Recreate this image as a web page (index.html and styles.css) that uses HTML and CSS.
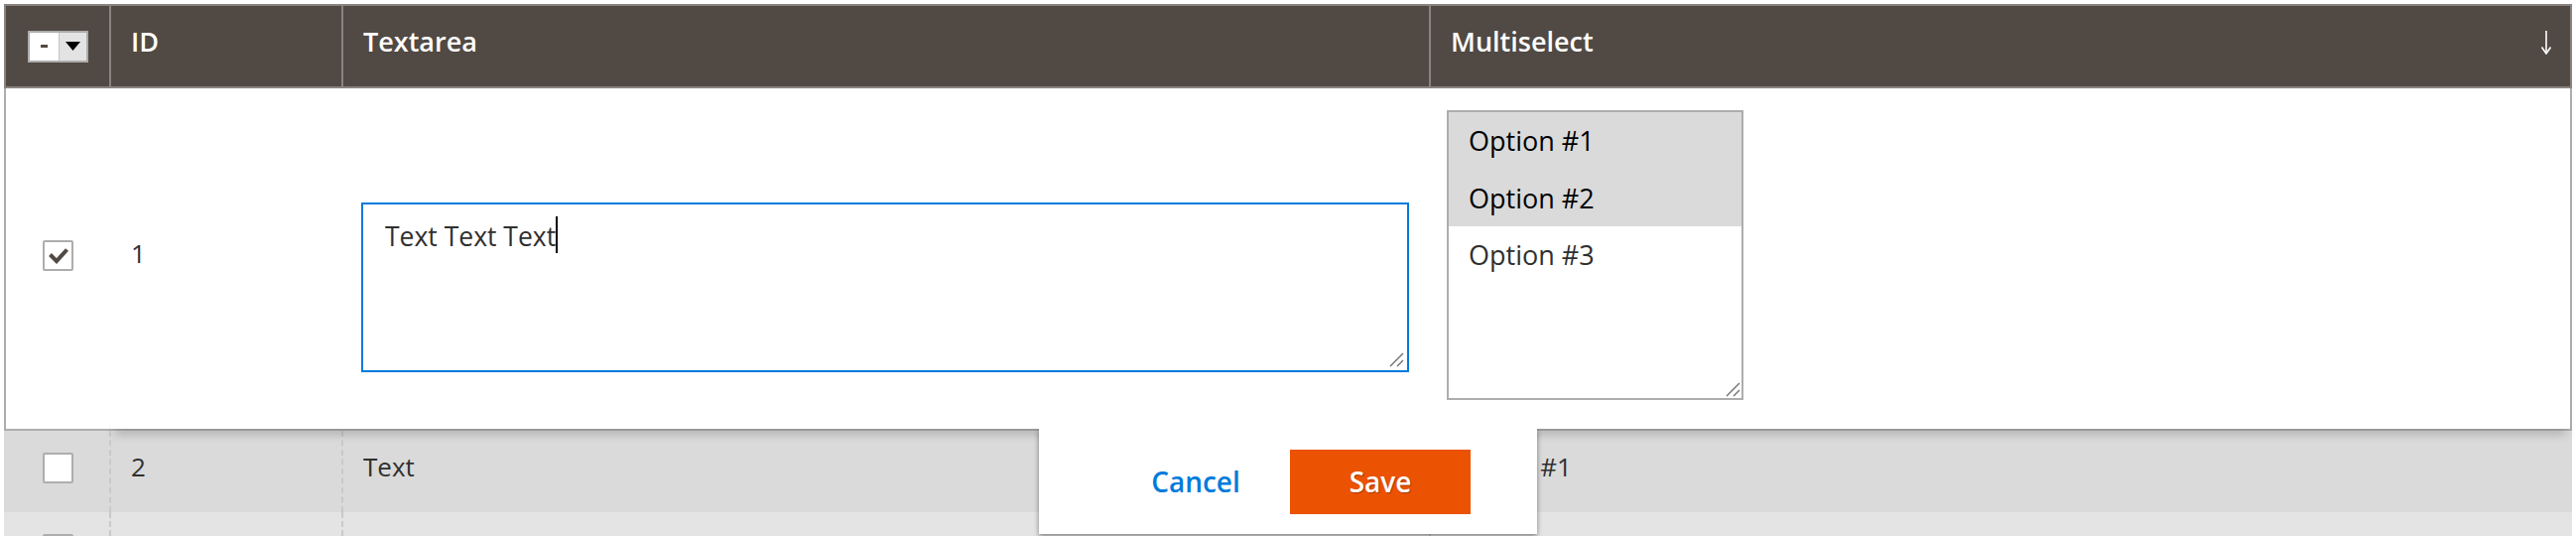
FILE: index.html
```html
<!DOCTYPE html>
<html lang="en">
<head>
<meta charset="utf-8">
<title>Inline edit grid</title>
<link rel="stylesheet" href="styles.css">
</head>
<body>
<div class="grid">
  <div class="row head">
    <div class="th th-check">
      <div class="multicheck">
        <span class="mc-box"><span class="mc-dash"></span></span>
        <span class="mc-toggle"><svg width="15" height="9" viewBox="0 0 15 9"><polygon points="0,0 15,0 7.5,9" fill="#000"/></svg></span>
      </div>
    </div>
    <div class="th">ID</div>
    <div class="th">Textarea</div>
    <div class="th th-sort"><span>Multiselect</span><svg class="sort-arrow" width="12" height="24" viewBox="0 0 12 24"><path d="M6 0 V21" stroke="#fff" stroke-width="1.6" fill="none"/><path d="M1.5 16.5 L6 23 L10.5 16.5" stroke="#fff" stroke-width="1.6" fill="none"/></svg></div>
  </div>

  <div class="row row-edit">
    <div class="td td-check"><span class="checkbox"><svg width="27" height="27" viewBox="0 0 27 27"><path d="M5.5 12.5 L12 19 L22.5 7.5" stroke="#514943" stroke-width="4" fill="none"/></svg></span></div>
    <div class="td td-id">1</div>
    <div class="td td-text">
      <div class="textarea">Text Text Text<span class="caret"></span>
        <svg class="grip" width="15" height="15" viewBox="0 0 15 15"><path d="M1 14 L14 1 M8 14 L14 8" stroke="#6e6e6e" stroke-width="1.4" fill="none"/></svg>
      </div>
    </div>
    <div class="td td-multi">
      <div class="multiselect">
        <div class="opt sel">Option #1</div>
        <div class="opt sel">Option #2</div>
        <div class="opt">Option #3</div>
        <svg class="grip grip-ms" width="15" height="15" viewBox="0 0 15 15"><path d="M1 14 L14 1 M8 14 L14 8" stroke="#6e6e6e" stroke-width="1.4" fill="none"/></svg>
      </div>
    </div>
  </div>

  <div class="row row-dim">
    <div class="td td-check"><span class="checkbox"></span></div>
    <div class="td">2</div>
    <div class="td">Text</div>
    <div class="td">Option #1</div>
  </div>

  <div class="row row-dim row-dim-alt">
    <div class="td td-check"><span class="checkbox"></span></div>
    <div class="td"></div>
    <div class="td"></div>
    <div class="td"></div>
  </div>

  <div class="edit-actions">
    <button class="btn btn-cancel" type="button">Cancel</button>
    <button class="btn btn-save" type="button">Save</button>
  </div>
</div>
</body>
</html>
```

FILE: styles.css
```css
html, body {
  margin: 0;
  background: #fff;
}
body {
  padding: 4px 4px 0;
  font-family: "Open Sans", "Liberation Sans", sans-serif;
  color: #303030;
  overflow: hidden;
}

.grid {
  position: relative;
}

.row {
  display: grid;
  grid-template-columns: 106px 234px 1096px 1fr;
  box-sizing: border-box;
}

/* header */
.head {
  height: 85px;
  background: #514943;
  border: 2px solid #8a837f;
  color: #fff;
  font-size: 27px;
  font-weight: 600;
  line-height: 40px;
}
.th {
  padding: 16px 20px 0;
  border-right: 2px solid #8a837f;
  white-space: nowrap;
}
.th:last-child {
  border-right: 0;
}
.th-check {
  padding: 0;
  display: flex;
  align-items: center;
  justify-content: center;
}
.th-sort {
  display: flex;
  justify-content: space-between;
  align-items: flex-start;
  padding-right: 18px;
}
.sort-arrow {
  margin-top: 9px;
}

.multicheck {
  display: flex;
  width: 61px;
  height: 32px;
  box-sizing: border-box;
  border: 2px solid #adadad;
}
.mc-box {
  width: 29px;
  background: #fff;
  border-right: 1px solid #c4c4c4;
  display: flex;
  align-items: center;
  justify-content: center;
}
.mc-dash {
  width: 7px;
  height: 3px;
  background: #514943;
}
.mc-toggle {
  flex: 1;
  background: #e3e3e3;
  display: flex;
  align-items: center;
  justify-content: center;
}

/* body cells */
.td {
  font-size: 26px;
  line-height: 36px;
  padding: 0 20px;
  border-right: 2px solid transparent;
  white-space: nowrap;
  overflow: hidden;
}
.td:last-child {
  border-right: 0;
}
.td-check {
  padding: 0;
  display: flex;
  justify-content: center;
  align-items: flex-start;
}
.checkbox {
  width: 31px;
  height: 31px;
  flex: none;
  box-sizing: border-box;
  border: 2px solid #adadad;
  border-radius: 2px;
  background: #fff;
  display: block;
}
.checkbox svg {
  display: block;
}

/* row being edited */
.row-edit {
  position: relative;
  z-index: 1;
  height: 345px;
  background: #fff;
  border: 2px solid #adadad;
  border-top: 0;
}
.row-edit::after {
  content: "";
  position: absolute;
  left: 106px;
  right: 0;
  bottom: 0;
  height: 12px;
  box-shadow: 0 8px 10px -4px rgba(0, 0, 0, 0.38);
  z-index: -1;
}
.row-edit .td-check {
  padding-top: 153px;
}
.row-edit .td-id {
  padding-top: 148px;
}
.row-edit .td-text {
  padding: 115px 20px 0 18px;
  overflow: visible;
}
.row-edit .td-multi {
  padding: 22px 0 0 16px;
  overflow: visible;
}

.textarea {
  position: relative;
  height: 171px;
  box-sizing: border-box;
  border: 2px solid #007bdb;
  padding: 14px 22px;
  font-size: 26.5px;
  line-height: 36px;
  color: #303030;
  background: #fff;
}
.caret {
  display: inline-block;
  width: 2px;
  height: 37px;
  background: #000;
  vertical-align: top;
  margin-top: -2px;
}
.grip {
  position: absolute;
  right: 3px;
  bottom: 3px;
}
.grip-ms {
  right: 1px;
  bottom: 1px;
}

.multiselect {
  position: relative;
  width: 299px;
  height: 292px;
  box-sizing: border-box;
  border: 2px solid #adadad;
  background: #fff;
  font-size: 27px;
  line-height: 37.5px;
}
.opt {
  padding: 10px 20px;
  color: #303030;
}
.opt.sel {
  background: #dadada;
  color: #000;
}

/* dimmed rows */
.row-dim {
  height: 82px;
  background: #dadada;
  border-left: 2px solid transparent;
  border-right: 2px solid transparent;
}
.row-dim-alt {
  height: 24px;
  overflow: hidden;
  background: #e4e4e4;
}
.row-dim .td {
  padding-top: 18px;
  border-right: 2px dashed #c9c9c9;
}
.row-dim .td:last-child {
  border-right: 0;
}
.row-dim .td-check {
  padding: 22px 0 0;
}

/* inline edit actions */
.edit-actions {
  position: absolute;
  top: 428px;
  left: 50%;
  transform: translateX(-50%);
  z-index: 2;
  width: 502px;
  height: 106px;
  box-sizing: border-box;
  background: #fff;
  display: flex;
  justify-content: center;
  align-items: center;
  gap: 4px;
  box-shadow: 0 2px 5px rgba(0, 0, 0, 0.45);
  clip-path: inset(0 -12px -12px -12px);
}
.btn {
  width: 182px;
  height: 65px;
  border: 0;
  padding: 0;
  font-family: inherit;
  font-size: 28px;
  font-weight: 600;
  cursor: pointer;
}
.btn-cancel {
  background: transparent;
  color: #007bdb;
}
.btn-save {
  background: #eb5202;
  color: #fff;
  text-shadow: 1px 1px 1px rgba(0, 0, 0, 0.3);
}
```
